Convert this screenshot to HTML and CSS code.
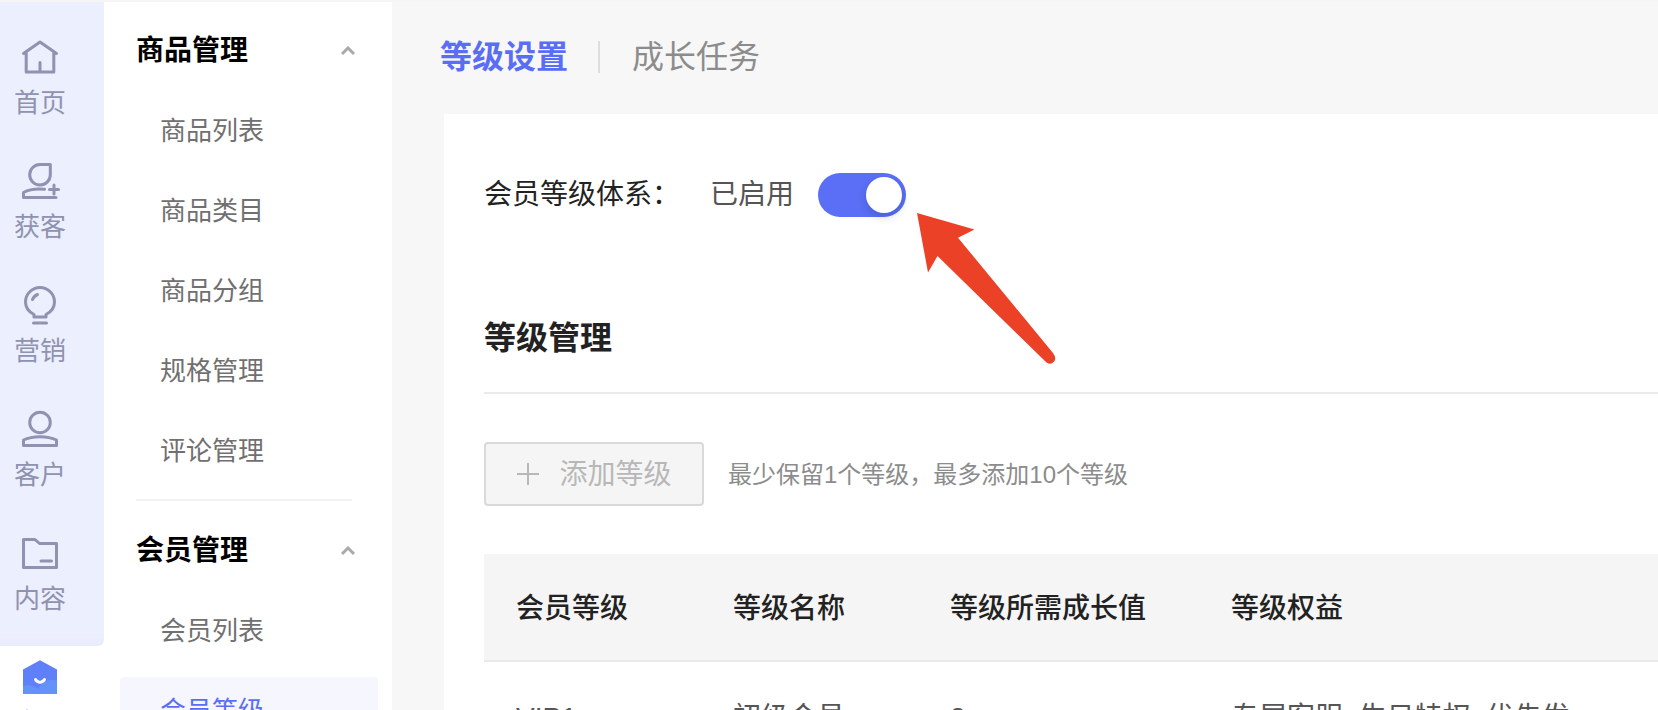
FILE: index.html
```
<!DOCTYPE html>
<html lang="zh-CN">
<head>
<meta charset="utf-8">
<meta name="viewport" content="width=device-width, initial-scale=1">
<title>等级设置</title>
<link rel="stylesheet" href="styles.css">
</head>
<body>
<div class="app">
  <nav class="rail" aria-label="主导航">
    <div class="rail-group">
      <a class="rail-item" href="#">
        <svg class="rail-icon" viewBox="0 0 40 40" aria-hidden="true"><path d="M3.500 16.500 20 5l16.500 11.500M6.200 15v20h27.600V15M20 25.500V35"/></svg>
        <span>首页</span>
      </a>
      <a class="rail-item" href="#">
        <svg class="rail-icon" viewBox="0 0 40 40" aria-hidden="true"><path d="M20 3.500h10.300V14A10.300 10.300 0 1 1 20 3.500ZM24.500 28.300C17 27.500 9 28.500 3.500 31.500v5h32.500M34 24v9M29.500 28.500h9"/></svg>
        <span>获客</span>
      </a>
      <a class="rail-item" href="#">
        <svg class="rail-icon" viewBox="0 0 40 40" aria-hidden="true"><path d="M14 32v-2.500C9 27 5.500 22.500 5.500 17a14.500 14.500 0 0 1 29 0c0 5.500-3.500 10-8.500 12.500V32ZM13.500 38h13M12.500 14.500c1-2.500 2.500-4 5-5"/></svg>
        <span>营销</span>
      </a>
      <a class="rail-item" href="#">
        <svg class="rail-icon" viewBox="0 0 40 40" aria-hidden="true"><circle cx="20" cy="13.500" r="10.300"/><path d="M3.500 31c9-4.500 24-4.500 33 0v5.500h-33Z"/></svg>
        <span>客户</span>
      </a>
      <a class="rail-item" href="#">
        <svg class="rail-icon" viewBox="0 0 40 40" aria-hidden="true"><path d="M3.500 6.500H15l4.500 4h17v24h-33ZM21 28h10.500"/></svg>
        <span>内容</span>
      </a>
    </div>
    <a class="rail-item rail-item-active" href="#" aria-current="page">
      <svg class="rail-icon" viewBox="0 0 40 40" aria-hidden="true"><path class="shop-body" d="M20 3.300 37 12.500V37H3V12.500Z"/><path class="shop-wave" d="M3 29.500c5-2.500 11-1.500 15.500 2.500C21 25 29 21 37 23.500V37H3Z"/><path class="shop-smile" d="M15.500 22.500c2 3.500 7 3.500 9 0"/></svg>
      <span>商城</span>
    </a>
  </nav>

  <aside class="menu">
    <section class="menu-group">
      <button class="menu-title" type="button" aria-expanded="true">商品管理
        <svg class="chevron" viewBox="0 0 16 10" aria-hidden="true"><path d="m2 8 6-6 6 6"/></svg>
      </button>
      <a class="menu-item" href="#">商品列表</a>
      <a class="menu-item" href="#">商品类目</a>
      <a class="menu-item" href="#">商品分组</a>
      <a class="menu-item" href="#">规格管理</a>
      <a class="menu-item" href="#">评论管理</a>
    </section>
    <hr class="menu-rule">
    <section class="menu-group">
      <button class="menu-title" type="button" aria-expanded="true">会员管理
        <svg class="chevron" viewBox="0 0 16 10" aria-hidden="true"><path d="m2 8 6-6 6 6"/></svg>
      </button>
      <a class="menu-item" href="#">会员列表</a>
      <a class="menu-item menu-item-active" href="#" aria-current="page">会员等级</a>
    </section>
  </aside>

  <main class="main">
    <div class="tabs">
      <a class="tab tab-active" href="#">等级设置</a>
      <a class="tab" href="#">成长任务</a>
    </div>
    <div class="card">
      <div class="setting">
        <label class="setting-label" for="level-switch">会员等级体系：</label>
        <span class="setting-state">已启用</span>
        <span class="switch-wrap">
          <input class="switch" id="level-switch" type="checkbox" role="switch" checked>
          <svg class="pointer" viewBox="0 0 140 154" aria-hidden="true"><path d="M0 0 57.500 16.500 41 24.700 136 140Q139 144 138 147 134.500 153 129.500 149.500L20.500 43 11 59.500Z"/></svg>
        </span>
      </div>
      <h2 class="section-title">等级管理</h2>
      <div class="toolbar">
        <button class="add" type="button" disabled>
          <svg class="plus" viewBox="0 0 24 24" aria-hidden="true"><path d="M12 1v22M1 12h22"/></svg><span>添加等级</span>
        </button>
        <span class="hint">最少保留1个等级，最多添加10个等级</span>
      </div>
      <table class="levels">
        <colgroup><col class="col-level"><col class="col-name"><col class="col-growth"><col></colgroup>
        <thead>
          <tr><th scope="col">会员等级</th><th scope="col">等级名称</th><th scope="col">等级所需成长值</th><th scope="col">等级权益</th></tr>
        </thead>
        <tbody>
          <tr><td>VIP1</td><td>初级会员</td><td>0</td><td>专属客服, 生日特权, 优先发...</td></tr>
        </tbody>
      </table>
    </div>
  </main>
</div>
</body>
</html>
```
FILE: styles.css
```
* { box-sizing: border-box; }

body {
  margin: 0;
  overflow: hidden;
  background: #f7f7f7;
  color: #222;
  font-family: "Liberation Sans", "Noto Sans CJK SC", sans-serif;
  font-size: 28px;
  line-height: 40px;
}

a { color: inherit; text-decoration: none; }

button { margin: 0; font: inherit; }

.app {
  display: flex;
  height: 100vh;
  border-top: 2px solid #f5f5f5;
}

/* icon rail */
.rail { flex: none; width: 104px; background: #fff; }

.rail-group {
  padding: 14px 0 10px;
  border-bottom-right-radius: 6px;
  background: linear-gradient(to top, #eaecfb, #eceffe 16px);
}

.rail-item {
  display: flex;
  flex-direction: column;
  align-items: center;
  gap: 8px;
  width: 80px;
  padding: 21px 0 19px;
  color: #8f92b0;
  font-size: 26px;
  line-height: 36px;
}

.rail-item-active { padding-top: 11px; color: #5a6ef5; }

.rail-icon {
  width: 40px;
  height: 40px;
  fill: none;
  stroke: currentColor;
  stroke-width: 3;
  stroke-linecap: round;
  stroke-linejoin: round;
}

.shop-body { fill: #6080fa; stroke: none; }
.shop-wave { fill: #6492f8; stroke: none; }
.shop-smile { stroke: #fff; }

/* secondary menu */
.menu { flex: none; width: 288px; padding: 15px 14px 0 16px; background: #fff; }

.menu-group { display: flex; flex-direction: column; gap: 16px; }

.menu-title {
  display: flex;
  align-items: center;
  justify-content: space-between;
  height: 64px;
  padding: 3px 22px 0 16px;
  border: 0;
  background: none;
  color: #000;
  font-weight: 700;
}

.chevron {
  width: 16px;
  height: 10px;
  fill: none;
  stroke: #aaa;
  stroke-width: 3;
}

.menu-item {
  padding: 14px 40px 10px;
  border-radius: 4px;
  color: #707070;
  font-size: 26px;
}

.menu-item-active { background: #f5f6ff; color: #5a6ef5; }

.menu-rule {
  height: 2px;
  margin: 18px 26px 16px 16px;
  border: 0;
  background: #f2f2f2;
}

/* page content */
.main { flex: 1; min-width: 0; }

.tabs { display: flex; align-items: center; padding: 31px 48px 33px; }

.tab {
  color: #8c8c8c;
  font-size: 32px;
  line-height: 48px;
}

.tab-active {
  display: flex;
  align-items: center;
  color: #5a6ef5;
  font-weight: 700;
}

.tab-active::after {
  width: 2px;
  height: 32px;
  margin: 0 32px 0 30px;
  background: #ddd;
  content: "";
}

.card { margin-left: 52px; padding: 59px 0 0 40px; background: #fff; }

.setting { display: flex; align-items: center; height: 44px; }

.setting-label { margin-right: 30px; }

.setting-state { margin-right: 24px; color: #555; }

.switch-wrap { position: relative; display: flex; }

.switch {
  display: flex;
  align-items: center;
  justify-content: flex-end;
  width: 88px;
  height: 44px;
  margin: 0;
  padding: 4px;
  border-radius: 22px;
  background: #5a6ff5;
  appearance: none;
}

.switch::before {
  width: 36px;
  height: 36px;
  border-radius: 50%;
  background: #fff;
  box-shadow: 0 4px 8px rgba(0, 35, 90, .2);
  content: "";
}

/* annotation arrow overlapping the card */
.pointer {
  position: absolute;
  top: 40px;
  left: 99px;
  width: 140px;
  height: 154px;
  fill: #eb4126;
}

.section-title {
  margin: 97px 0 0;
  padding-bottom: 30px;
  border-bottom: 2px solid #ebebeb;
  font-size: 32px;
  font-weight: 700;
  line-height: 48px;
}

.toolbar { display: flex; align-items: center; gap: 24px; margin: 48px 0; }

.add {
  display: flex;
  align-items: center;
  justify-content: center;
  gap: 19px;
  width: 220px;
  height: 64px;
  padding: 0;
  border: 2px solid #d9d9d9;
  border-radius: 4px;
  background: #f5f5f5;
  color: #b8b8b8;
}

.plus { width: 24px; height: 24px; fill: none; stroke: #b8b8b8; stroke-width: 2; }

.add span,
.hint { padding-top: 2px; }

.hint { color: #8c8c8c; font-size: 24px; white-space: nowrap; }

.levels { width: 100%; border-collapse: collapse; table-layout: fixed; }

.levels th,
.levels td {
  border-bottom: 2px solid #e8e8e8;
  text-align: left;
  white-space: nowrap;
}

.levels th {
  padding: 34px 32px 30px;
  background: #f5f5f5;
  font-weight: 500;
  line-height: 42px;
}

.levels td { padding: 36px 32px 32px; color: #555; }

.col-level, .col-name { width: 217px; }
.col-growth { width: 281px; }
```
